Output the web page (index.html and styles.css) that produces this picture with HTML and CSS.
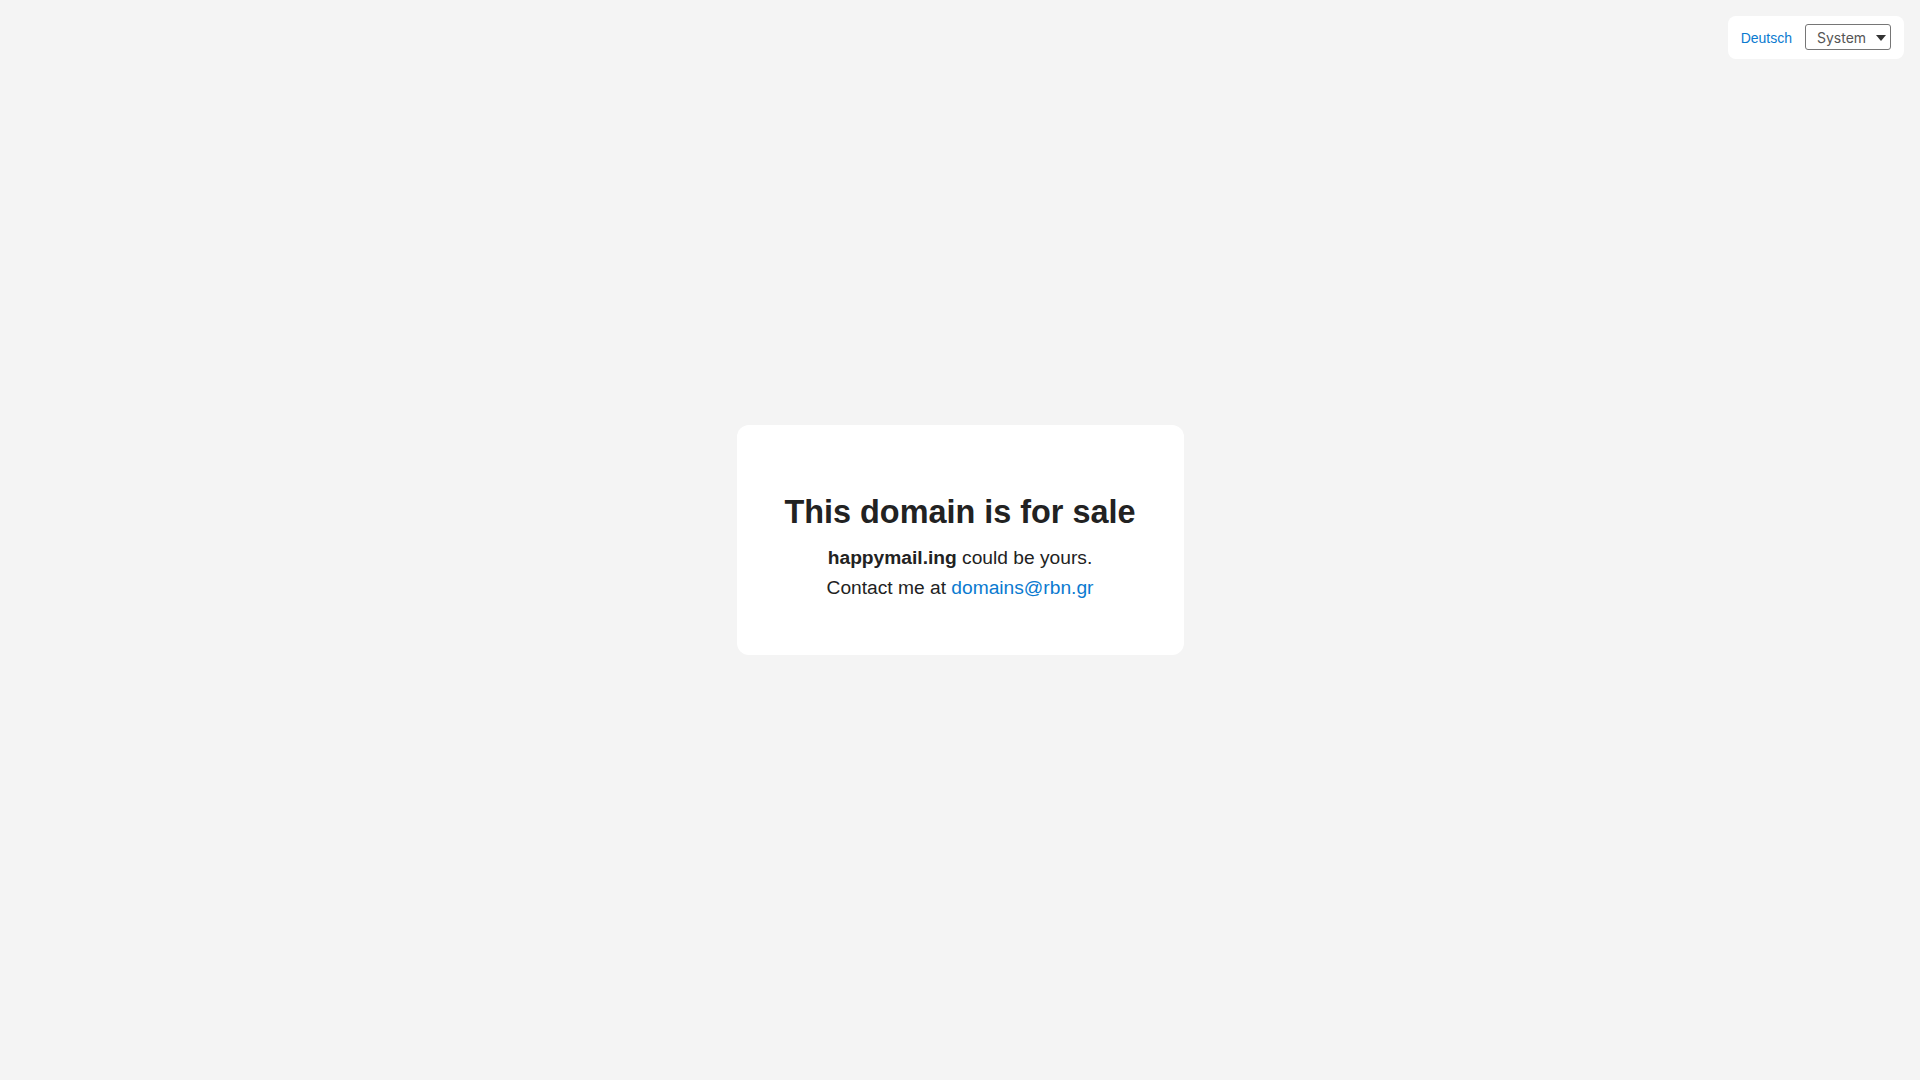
FILE: index.html
```html
<!DOCTYPE html>
<html lang="en">
<head>
<meta charset="utf-8">
<title>This domain is for sale</title>
<link rel="stylesheet" href="styles.css">
</head>
<body>
<div class="topbar">
  <div class="lang-box">
    <a class="lang-link" href="#">Deutsch</a>
    <div class="theme-select">
      <span class="theme-label">System</span>
      <svg class="caret" width="10" height="6" viewBox="0 0 10 6"><path d="M0 0 H10 L5 6 Z" fill="#333"/></svg>
    </div>
  </div>
</div>
<main class="stage">
  <div class="card">
    <h1 class="title">This domain is for sale</h1>
    <p class="line"><strong>happymail.ing</strong> could be yours.</p>
    <p class="line">Contact me at <a class="mail" href="#">domains@rbn.gr</a></p>
  </div>
</main>
</body>
</html>
```

FILE: styles.css
```css
html, body {
  margin: 0;
  padding: 0;
  height: 100%;
}
body {
  background: #f4f4f4;
  color: #222;
  font-family: "Liberation Sans", Arial, sans-serif;
  position: relative;
}
.topbar {
  position: absolute;
  top: 16px;
  right: 16px;
}
.lang-box {
  display: flex;
  align-items: center;
  gap: 13px;
  background: #fff;
  border-radius: 8px;
  padding: 8px 13px 9px 13px;
  height: 26px;
}
.lang-link {
  color: #0a7ad0;
  text-decoration: none;
  font-size: 14px;
  line-height: 26px;
  padding-top: 2px;
}
.theme-select {
  box-sizing: border-box;
  width: 86px;
  height: 26px;
  border: 1px solid #767676;
  border-radius: 3px;
  display: flex;
  align-items: center;
  justify-content: space-between;
  padding: 0 4px 0 11px;
  background: #fff;
}
.theme-label {
  font-family: Inter, "Liberation Sans", sans-serif;
  font-size: 14px;
  color: #555;
}
.caret {
  display: block;
  margin-top: 1px;
}
.stage {
  height: 100%;
  display: flex;
  align-items: center;
  justify-content: center;
}
.card {
  box-sizing: border-box;
  width: 447px;
  height: 230px;
  background: #fff;
  border-radius: 12px;
  padding: 69px 20px 0 20px;
  text-align: center;
}
.title {
  margin: 0 0 12px 0;
  font-size: 32.4px;
  font-weight: bold;
  line-height: 36.8px;
  color: #222;
}
.line {
  margin: 0;
  font-size: 19.2px;
  line-height: 30px;
}
.line strong {
  font-weight: bold;
}
.mail {
  color: #0a7ad0;
  text-decoration: none;
}
```
